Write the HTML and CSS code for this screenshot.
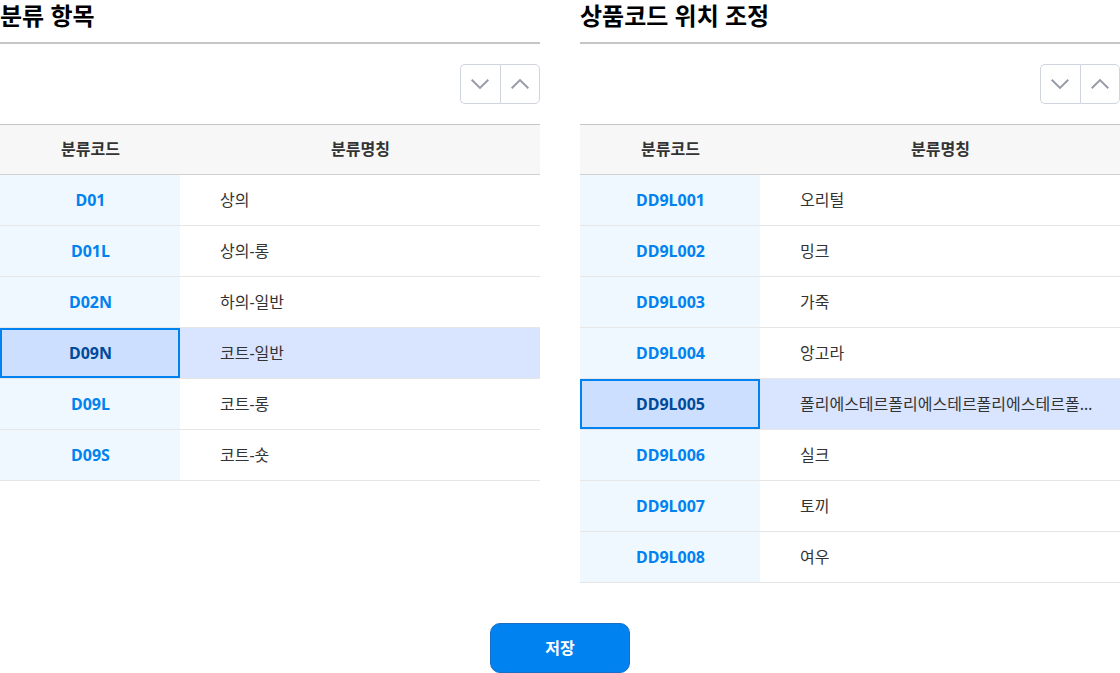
FILE: index.html
```
<!DOCTYPE html>
<html lang="ko">
<head>
<meta charset="utf-8">
<title>분류 항목</title>
<link rel="stylesheet" href="styles.css">
</head>
<body>
<main class="page">
  <div class="panels">
    <section class="panel">
      <h2 class="panel-title">분류 항목</h2>
      <div class="sorter">
        <button type="button" class="sort-btn" aria-label="아래로"><svg class="chevron" viewBox="0 0 20 12"><path d="M1.700 1.700 10 9.900l8.300-8.200"/></svg></button>
        <button type="button" class="sort-btn" aria-label="위로"><svg class="chevron" viewBox="0 0 20 12"><path d="M1.700 10.300 10 2.100l8.300 8.200"/></svg></button>
      </div>
      <table class="codes">
        <thead><tr><th class="col-code" scope="col">분류코드</th><th scope="col">분류명칭</th></tr></thead>
        <tbody>
          <tr><th scope="row">D01</th><td>상의</td></tr>
          <tr><th scope="row">D01L</th><td>상의-롱</td></tr>
          <tr><th scope="row">D02N</th><td>하의-일반</td></tr>
          <tr class="selected"><th scope="row">D09N</th><td>코트-일반</td></tr>
          <tr><th scope="row">D09L</th><td>코트-롱</td></tr>
          <tr><th scope="row">D09S</th><td>코트-숏</td></tr>
        </tbody>
      </table>
    </section>
    <section class="panel">
      <h2 class="panel-title">상품코드 위치 조정</h2>
      <div class="sorter">
        <button type="button" class="sort-btn" aria-label="아래로"><svg class="chevron" viewBox="0 0 20 12"><path d="M1.700 1.700 10 9.900l8.300-8.200"/></svg></button>
        <button type="button" class="sort-btn" aria-label="위로"><svg class="chevron" viewBox="0 0 20 12"><path d="M1.700 10.300 10 2.100l8.300 8.200"/></svg></button>
      </div>
      <table class="codes">
        <thead><tr><th class="col-code" scope="col">분류코드</th><th scope="col">분류명칭</th></tr></thead>
        <tbody>
          <tr><th scope="row">DD9L001</th><td>오리털</td></tr>
          <tr><th scope="row">DD9L002</th><td>밍크</td></tr>
          <tr><th scope="row">DD9L003</th><td>가죽</td></tr>
          <tr><th scope="row">DD9L004</th><td>앙고라</td></tr>
          <tr class="selected"><th scope="row">DD9L005</th><td>폴리에스테르폴리에스테르폴리에스테르폴리에스테르</td></tr>
          <tr><th scope="row">DD9L006</th><td>실크</td></tr>
          <tr><th scope="row">DD9L007</th><td>토끼</td></tr>
          <tr><th scope="row">DD9L008</th><td>여우</td></tr>
        </tbody>
      </table>
    </section>
  </div>
  <button type="submit" class="save">저장</button>
</main>
</body>
</html>
```

FILE: styles.css
```
* {
  box-sizing: border-box;
}

body {
  margin: 0;
  background: #fff;
  color: #333;
  font-family: "Noto Sans", "Noto Sans CJK KR", sans-serif;
  font-size: 16px;
}

.page {
  display: flex;
  flex-direction: column;
  align-items: center;
  gap: 40px;
}

.panels {
  display: grid;
  grid-template-columns: minmax(0, 1fr) minmax(0, 1fr);
  align-items: start;
  gap: 40px;
  width: 100%;
}

.panel-title {
  margin: 0;
  padding-bottom: 10px;
  border-bottom: 2px solid #c6c6c6;
  color: #000;
  font-size: 24px;
  line-height: 32px;
}

.sorter {
  display: flex;
  justify-content: flex-end;
  padding: 20px 0;
}

.sort-btn {
  display: flex;
  align-items: center;
  justify-content: center;
  width: 40px;
  height: 40px;
  padding: 0;
  border: 1px solid #d0d5dd;
  border-radius: 0 5px 5px 0;
  background: #fff;
}

.sort-btn:first-child {
  padding-right: 1px;
  border-right: 0;
  border-radius: 5px 0 0 5px;
}

.chevron {
  width: 20px;
  height: 12px;
  fill: none;
  stroke: #999ca8;
  stroke-width: 2;
}

.codes {
  width: 100%;
  border-top: 1px solid #c6c6c6;
  border-collapse: separate;
  border-spacing: 0;
  table-layout: fixed;
  line-height: 24px;
}

.codes th,
.codes td {
  height: 51px;
  border-bottom: 1px solid #e6e6e6;
}

.codes th {
  padding: 0 0 0 1px;
}

.codes thead th {
  height: 50px;
  padding-bottom: 1px;
  border-color: #d0d0d0;
  background: #f7f7f7;
}

.codes .col-code {
  width: 33.333%;
}

.codes tbody th {
  background: #f0f8ff;
  color: #0082f0;
}

.codes td {
  padding: 0 20px 0 40px;
  overflow: hidden;
  text-overflow: ellipsis;
  white-space: nowrap;
}

.codes .selected td {
  background: #d9e4ff;
}

.codes .selected th {
  background: #ccdfff;
  color: #004a9b;
  box-shadow: inset 0 0 0 2px #0082f0;
}

.save {
  width: 140px;
  height: 50px;
  padding: 0 0 2px;
  border: 1px solid #1a6fc4;
  border-radius: 10px;
  background: #0082f0;
  color: #fff;
  font: inherit;
  font-weight: 700;
}
```
